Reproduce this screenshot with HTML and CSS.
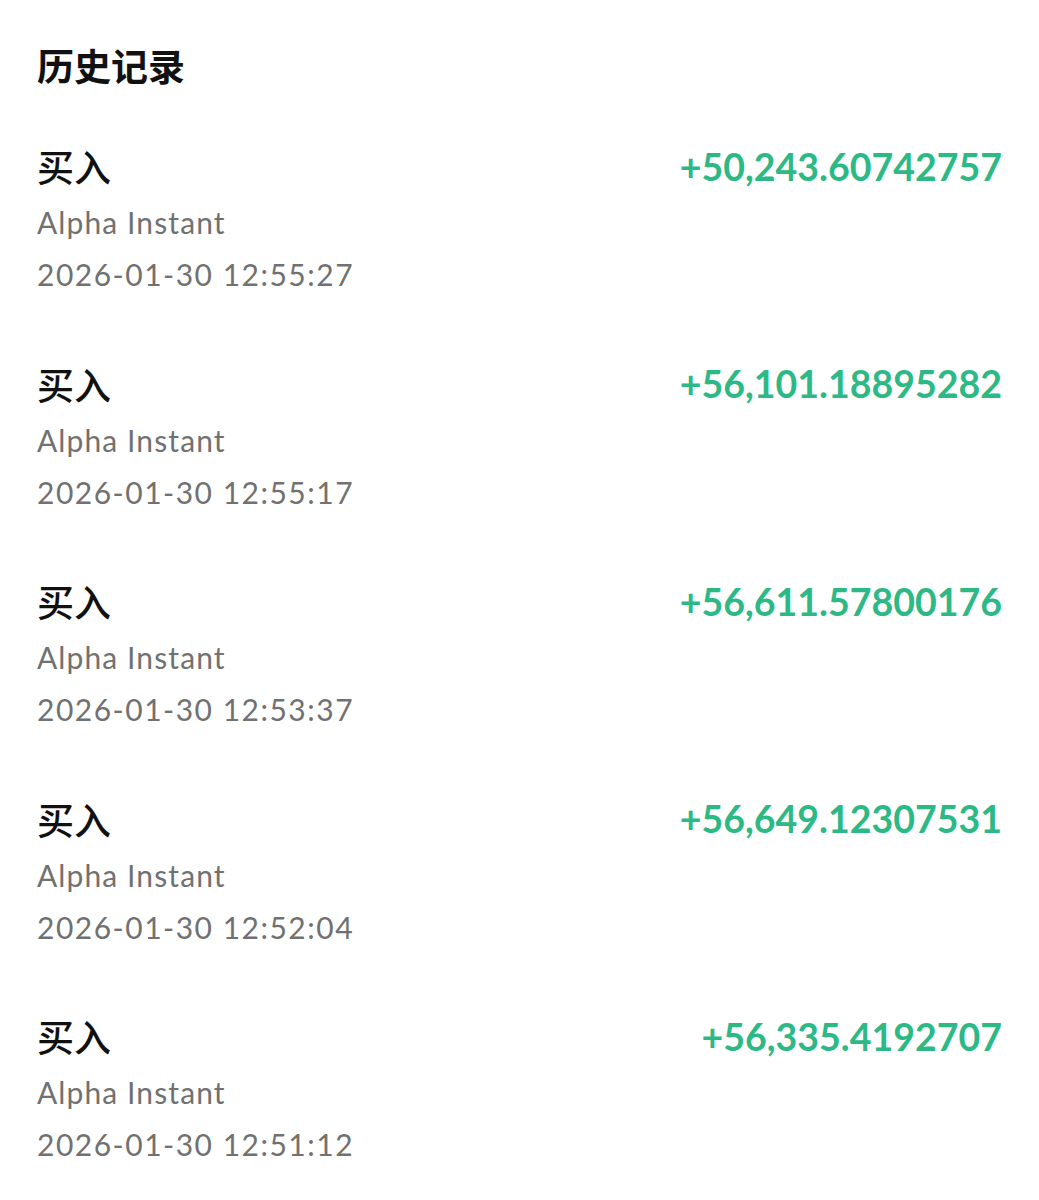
FILE: index.html
```html
<!DOCTYPE html>
<html lang="zh-CN">
<head>
    <meta charset="UTF-8">
    <meta name="viewport" content="width=device-width, initial-scale=1.0">
    <title>历史记录</title>
    <link rel="stylesheet" href="styles.css">
</head>
<body>
    <div class="page">
        <h1 class="title">历史记录</h1>

        <div class="history-list">
            <div class="record">
                <div class="record-top">
                    <span class="record-type">买入</span>
                    <span class="record-amount">+50,243.60742757</span>
                </div>
                <p class="record-source">Alpha Instant</p>
                <p class="record-time">2026-01-30 12:55:27</p>
            </div>

            <div class="record">
                <div class="record-top">
                    <span class="record-type">买入</span>
                    <span class="record-amount">+56,101.18895282</span>
                </div>
                <p class="record-source">Alpha Instant</p>
                <p class="record-time">2026-01-30 12:55:17</p>
            </div>

            <div class="record">
                <div class="record-top">
                    <span class="record-type">买入</span>
                    <span class="record-amount">+56,611.57800176</span>
                </div>
                <p class="record-source">Alpha Instant</p>
                <p class="record-time">2026-01-30 12:53:37</p>
            </div>

            <div class="record">
                <div class="record-top">
                    <span class="record-type">买入</span>
                    <span class="record-amount">+56,649.12307531</span>
                </div>
                <p class="record-source">Alpha Instant</p>
                <p class="record-time">2026-01-30 12:52:04</p>
            </div>

            <div class="record">
                <div class="record-top">
                    <span class="record-type">买入</span>
                    <span class="record-amount">+56,335.4192707</span>
                </div>
                <p class="record-source">Alpha Instant</p>
                <p class="record-time">2026-01-30 12:51:12</p>
            </div>
        </div>
    </div>
</body>
</html>
```

FILE: styles.css
```css
:root {
    --text-main: #111111;
    --text-muted: #717171;
    --buy-green: #2db985;
}

* {
    margin: 0;
    padding: 0;
    box-sizing: border-box;
}

body {
    background: #ffffff;
    font-family: 'Lato', 'Noto Sans CJK SC', sans-serif;
    color: var(--text-main);
}

.page {
    padding: 41px 37px 0;
}

/* Titulo */
.title {
    font-size: 37px;
    line-height: 52px;
    font-weight: 700;
}

/* Lista */
.history-list {
    margin-top: 47px;
    display: flex;
    flex-direction: column;
    gap: 57.5px;
}

.record-top {
    display: flex;
    justify-content: space-between;
    align-items: center;
    height: 52px;
    margin-bottom: 4px;
}

.record-type {
    font-size: 37px;
    font-weight: 500;
}

.record-amount {
    font-size: 37.5px;
    font-weight: 700;
    color: var(--buy-green);
}

.record-source,
.record-time {
    font-size: 30px;
    line-height: 52px;
    letter-spacing: 1.1px;
    color: var(--text-muted);
}

.record-time {
    letter-spacing: 1.5px;
}
```
